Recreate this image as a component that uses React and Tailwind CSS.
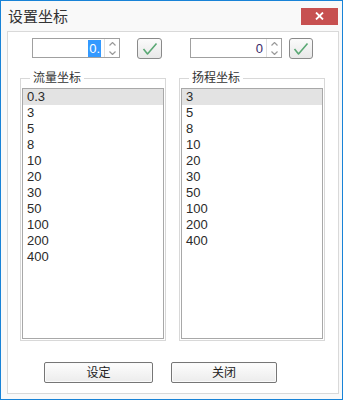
import React from "react"

const FONT = { fontFamily: '"Liberation Sans", "Noto Sans CJK SC", sans-serif' }

const flowValues = ["0.3", "3", "5", "8", "10", "20", "30", "50", "100", "200", "400"]
const headValues = ["3", "5", "8", "10", "20", "30", "50", "100", "200", "400"]

const SpinBox = ({ value, selected, width }) => (
  <div className={`flex h-[20px] border border-[#a0a0a0] bg-white ${width}`}>
    <div className="flex flex-1 items-center justify-end pr-[3px] text-[13px] leading-none">
      {selected ? (
        <span className="bg-[#3399ff] px-[1px] py-[2px] text-white">{value}</span>
      ) : (
        <span className="text-[#3a2a6a]">{value}</span>
      )}
    </div>
    <div className="flex w-[15px] flex-col border-l border-[#e0e0e0]">
      <div className="flex flex-1 items-center justify-center">
        <svg width="7" height="4" viewBox="0 0 7 4">
          <polyline points="0.5,3.5 3.5,0.5 6.5,3.5" fill="none" stroke="#9a9a9a" strokeWidth="1.2" />
        </svg>
      </div>
      <div className="flex flex-1 items-center justify-center">
        <svg width="7" height="4" viewBox="0 0 7 4">
          <polyline points="0.5,0.5 3.5,3.5 6.5,0.5" fill="none" stroke="#9a9a9a" strokeWidth="1.2" />
        </svg>
      </div>
    </div>
  </div>
)

const CheckButton = ({ className }) => (
  <button
    className={`flex h-[21px] items-center justify-center rounded-[3px] border border-[#8a8a8a] bg-gradient-to-b from-[#fbfbfb] to-[#e8e8e8] ${className}`}
  >
    <svg width="16" height="14" viewBox="0 0 16 14">
      <polyline
        points="1.5,7 5.5,12 14.5,1.5"
        fill="none"
        stroke="#5aa874"
        strokeWidth="1.6"
        strokeLinejoin="round"
      />
    </svg>
  </button>
)

const GroupList = ({ title, items, className }) => (
  <div className={`relative h-[263px] w-[146px] border border-[#d8d8d8] px-[1px] pb-[1px] pt-[9px] ${className}`}>
    <span className="absolute left-[9px] top-[-9px] bg-white px-[3px] text-[12px] leading-[16px] text-[#333]">
      {title}
    </span>
    <div className="h-full w-full border border-[#a8a8a8] bg-white">
      {items.map((v, i) => (
        <div
          key={v}
          className={`h-[16px] pl-[4px] text-[13px] leading-[16px] text-[#2a2a2a] ${i === 0 ? "bg-[#e3e3e3]" : ""}`}
        >
          {v}
        </div>
      ))}
    </div>
  </div>
)

const DialogButton = ({ label, className }) => (
  <button
    className={`h-[21px] rounded-[2px] border border-[#767676] bg-gradient-to-b from-[#fdfdfd] to-[#ececec] text-[12px] leading-none text-[#222] shadow-[inset_0_0_0_1px_#fafafa] ${className}`}
  >
    {label}
  </button>
)

export default function App() {
  return (
    <div className="h-[401px] w-[346px] bg-white" style={FONT}>
      <div className="flex h-[400px] w-[343px] flex-col border border-[#1883d7] bg-[#f9f9f9]">
        {/* title bar */}
        <div className="flex h-[30px] items-center justify-between">
          <span className="ml-[7px] text-[15px] leading-none text-[#333]">设置坐标</span>
          <button className="mr-[4px] flex h-[17px] w-[37px] items-center justify-center bg-[#c75050]">
            <svg width="9" height="8" viewBox="0 0 9 8">
              <path d="M1 0.5 L8 7.5 M8 0.5 L1 7.5" stroke="#fff" strokeWidth="1.8" />
            </svg>
          </button>
        </div>

        {/* body */}
        <div className="ml-[6px] flex h-[363px] w-[332px] flex-col border border-[#d9d9d9] bg-white">
          <div className="mt-[6px] flex">
            <SpinBox value="0." selected width="ml-[24px] w-[88px]" />
            <CheckButton className="ml-[17px] w-[25px]" />
            <SpinBox value="0" width="ml-[28px] w-[92px]" />
            <CheckButton className="ml-[7px] w-[24px]" />
          </div>

          <div className="mt-[19px] flex">
            <GroupList title="流量坐标" items={flowValues} className="ml-[12px]" />
            <GroupList title="扬程坐标" items={headValues} className="ml-[13px]" />
          </div>

          <div className="mt-[21px] flex">
            <DialogButton label="设定" className="ml-[36px] w-[109px]" />
            <DialogButton label="关闭" className="ml-[18px] w-[106px]" />
          </div>
        </div>
      </div>
    </div>
  )
}
